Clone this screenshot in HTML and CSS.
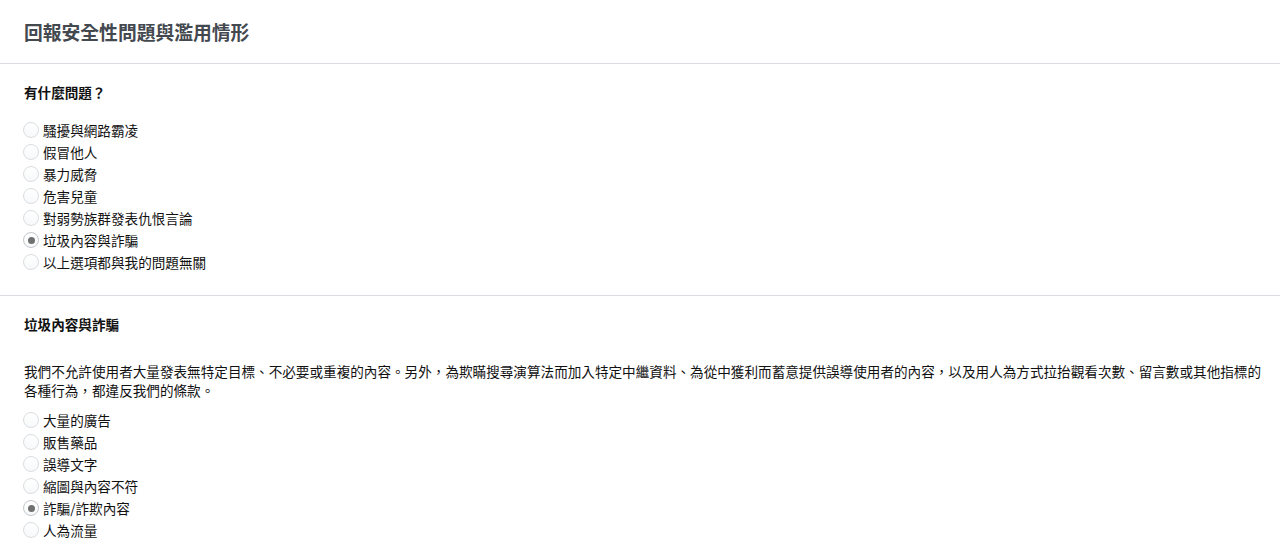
FILE: index.html
```html
<!DOCTYPE html>
<html lang="zh-Hant">
<head>
  <meta charset="UTF-8" />
  <meta name="viewport" content="width=device-width, initial-scale=1.0" />
  <title>回報安全性問題與濫用情形</title>
  <link rel="stylesheet" href="styles.css">
</head>
<body>
  <header class="report-header">
    <h1>回報安全性問題與濫用情形</h1>
  </header>
  <main>
    <section class="report-section">
      <h2>有什麼問題？</h2>
      <form class="options">
        <label class="option"><input type="radio" name="issue" /><span>騷擾與網路霸凌</span></label>
        <label class="option"><input type="radio" name="issue" /><span>假冒他人</span></label>
        <label class="option"><input type="radio" name="issue" /><span>暴力威脅</span></label>
        <label class="option"><input type="radio" name="issue" /><span>危害兒童</span></label>
        <label class="option"><input type="radio" name="issue" /><span>對弱勢族群發表仇恨言論</span></label>
        <label class="option"><input type="radio" name="issue" checked /><span>垃圾內容與詐騙</span></label>
        <label class="option"><input type="radio" name="issue" /><span>以上選項都與我的問題無關</span></label>
      </form>
    </section>
    <section class="report-section">
      <h2>垃圾內容與詐騙</h2>
      <p class="policy">我們不允許使用者大量發表無特定目標、不必要或重複的內容。另外，為欺瞞搜尋演算法而加入特定中繼資料、為從中獲利而蓄意提供誤導使用者的內容，以及用人為方式拉抬觀看次數、留言數或其他指標的各種行為，都違反我們的條款。</p>
      <form class="options">
        <label class="option"><input type="radio" name="spam" /><span>大量的廣告</span></label>
        <label class="option"><input type="radio" name="spam" /><span>販售藥品</span></label>
        <label class="option"><input type="radio" name="spam" /><span>誤導文字</span></label>
        <label class="option"><input type="radio" name="spam" /><span>縮圖與內容不符</span></label>
        <label class="option"><input type="radio" name="spam" checked /><span>詐騙/詐欺內容</span></label>
        <label class="option"><input type="radio" name="spam" /><span>人為流量</span></label>
      </form>
    </section>
  </main>
</body>
</html>
```

FILE: styles.css
```css
/* Variables */
:root {
  --text-color: #111111;
  --title-color: #444950;
  --line-color: #dadde1;
  --radio-border: #dadde1;
  --radio-dot: #707070;
  --font-stack: "Noto Sans CJK TC", "Liberation Sans", sans-serif;
}
/* Base */
body {
  margin: 0;
  background: #ffffff;
  color: var(--text-color);
  font-family: var(--font-stack);
  font-size: 13.6px;
}
/* Header */
.report-header {
  height: 63px;
  padding: 0 24px;
  display: flex;
  align-items: center;
  border-bottom: 1px solid var(--line-color);
}
.report-header h1 {
  margin: 0;
  font-size: 18.8px;
  font-weight: 600;
  color: var(--title-color);
  line-height: 24px;
}
/* Sections */
.report-section {
  padding: 18px 12px 22px 24px;
  border-bottom: 1px solid var(--line-color);
}
.report-section:last-child {
  border-bottom: none;
}
.report-section h2 {
  margin: 0 0 17px;
  font-size: 13.6px;
  font-weight: 700;
  line-height: 20px;
}
.report-section h2 + .policy {
  margin-top: 28px;
}
.policy {
  margin: 0 0 9px;
  line-height: 19px;
}
/* Radio list */
.options {
  display: flex;
  flex-direction: column;
}
.option {
  display: flex;
  align-items: center;
  gap: 4px;
  height: 22px;
  line-height: 22px;
  cursor: pointer;
}
.option input {
  appearance: none;
  -webkit-appearance: none;
  margin: 0 0 0 -1px;
  width: 16px;
  height: 16px;
  border: 1px solid var(--radio-border);
  border-radius: 50%;
  background: linear-gradient(#ffffff, #f7f8f9);
  display: grid;
  place-items: center;
  flex-shrink: 0;
}
.option input:checked {
  border-color: #c4c7cc;
}
.option input:checked::after {
  content: "";
  width: 7px;
  height: 7px;
  border-radius: 50%;
  background: var(--radio-dot);
}
```
